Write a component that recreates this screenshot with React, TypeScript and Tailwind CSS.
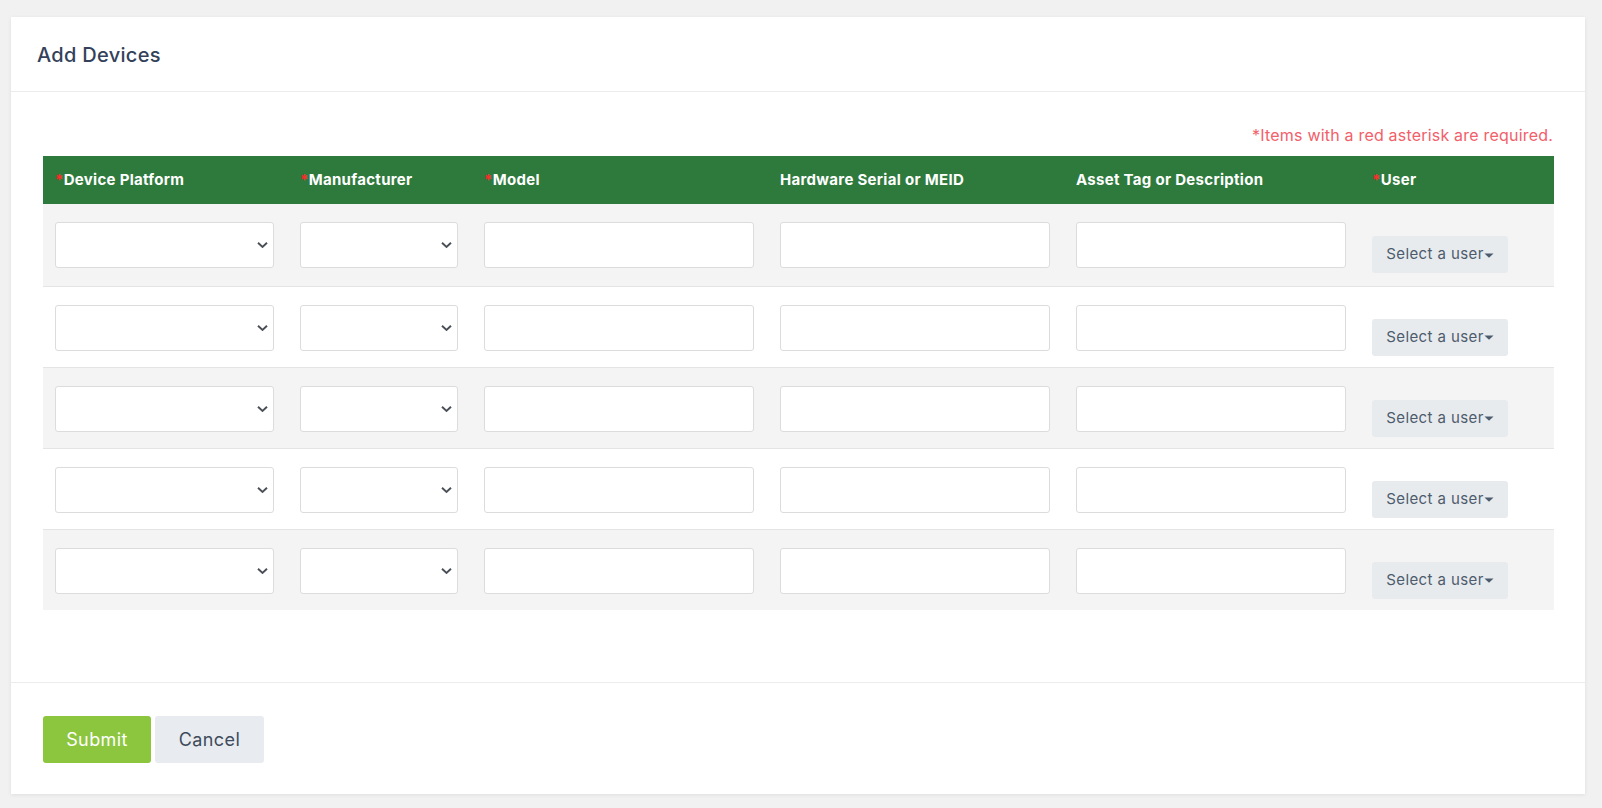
import React from 'react';

type Col = { label: string; required?: boolean; width: string };

const columns: Col[] = [
  { label: 'Device Platform', required: true, width: 'w-[245px]' },
  { label: 'Manufacturer', required: true, width: 'w-[184px]' },
  { label: 'Model', required: true, width: 'w-[296px]' },
  { label: 'Hardware Serial or MEID', width: 'w-[296px]' },
  { label: 'Asset Tag or Description', width: 'w-[296px]' },
  { label: 'User', required: true, width: 'w-[194px]' },
];

const rows = [0, 1, 2, 3, 4];

const fieldClass =
  'h-[46px] w-full rounded-[3px] border border-[#dcdcdc] bg-white px-3 text-sm text-[#333] outline-none';

function SelectBox() {
  return (
    <div className="relative">
      <select className={`${fieldClass} appearance-none`} defaultValue="">
        <option value="" />
      </select>
      <svg
        className="pointer-events-none absolute right-[6px] top-1/2 -translate-y-1/2"
        width="11"
        height="7"
        viewBox="0 0 11 7"
        fill="none"
      >
        <path d="M1 1.2l4.5 4.3L10 1.2" stroke="#4b5058" strokeWidth="1.9" />
      </svg>
    </div>
  );
}

function UserButton() {
  return (
    <button
      type="button"
      className="flex h-[37px] w-[136px] items-center justify-center rounded-[3px] bg-[#e8ebee] text-[15px] tracking-[0.4px] text-[#4d5c6d]"
    >
      <span>Select a user</span>
      <svg width="10" height="5" viewBox="0 0 10 5" className="mt-[1px]">
        <path d="M0.5 0.5h9L5 4.8z" fill="#4d5c6d" />
      </svg>
    </button>
  );
}

export default function App() {
  return (
    <div className="min-h-screen bg-[#f1f1f1] pl-[11px] pr-[17px] pt-[17px] pb-[13px] font-['Inter',sans-serif]">
      <div className="bg-white shadow-[0_1px_4px_rgba(0,0,0,0.08)]">
        <div className="flex h-[75px] items-center border-b border-[#ececec] pl-[26px] pt-[2px]">
          <h1 className="text-[20px] font-medium tracking-[0.3px] text-[#33415a]">Add Devices</h1>
        </div>

        <div className="px-8 pt-[33px] pb-[72px]">
          <p className="mb-[11px] text-right text-[16px] leading-[20px] tracking-[0.2px] text-[#f2606a]">
            *Items with a red asterisk are required.
          </p>
          <table className="w-full table-fixed border-collapse">
            <thead>
              <tr className="h-[48px] bg-[#2e7a3c]">
                {columns.map(col => (
                  <th
                    key={col.label}
                    className={`${col.width} pl-3 text-left text-[15px] font-bold tracking-[0.3px] text-white`}
                  >
                    {col.required && <span className="text-[#ff2b2b]">*</span>}
                    {col.label}
                  </th>
                ))}
              </tr>
            </thead>
            <tbody>
              {rows.map(i => (
                <tr
                  key={i}
                  className={`${i % 2 === 0 ? 'bg-[#f4f4f4]' : 'bg-white'} ${i > 0 ? 'border-t border-[#e4e4e4]' : ''}`}
                >
                  <td className={`${i === 0 ? 'h-[82px]' : 'h-[81px]'} pl-3 pr-[14px] pt-[18px] align-top`}>
                    <SelectBox />
                  </td>
                  <td className="pl-3 pr-[14px] pt-[18px] align-top">
                    <SelectBox />
                  </td>
                  <td className="pl-3 pr-[14px] pt-[18px] align-top">
                    <input className={fieldClass} />
                  </td>
                  <td className="pl-3 pr-[14px] pt-[18px] align-top">
                    <input className={fieldClass} />
                  </td>
                  <td className="pl-3 pr-[14px] pt-[18px] align-top">
                    <input className={fieldClass} />
                  </td>
                  <td className="pl-3 pt-[32px] align-top">
                    <UserButton />
                  </td>
                </tr>
              ))}
            </tbody>
          </table>
        </div>

        <div className="flex gap-1 border-t border-[#ececec] px-8 pt-[33px] pb-[31px]">
          <button
            type="button"
            className="h-[47px] w-[108px] rounded-[3px] bg-[#8cc63e] text-[18px] tracking-[0.4px] text-white"
          >
            Submit
          </button>
          <button
            type="button"
            className="h-[47px] w-[109px] rounded-[3px] bg-[#e8ebef] text-[18px] tracking-[0.4px] text-[#3e4b5c]"
          >
            Cancel
          </button>
        </div>
      </div>
    </div>
  );
}
